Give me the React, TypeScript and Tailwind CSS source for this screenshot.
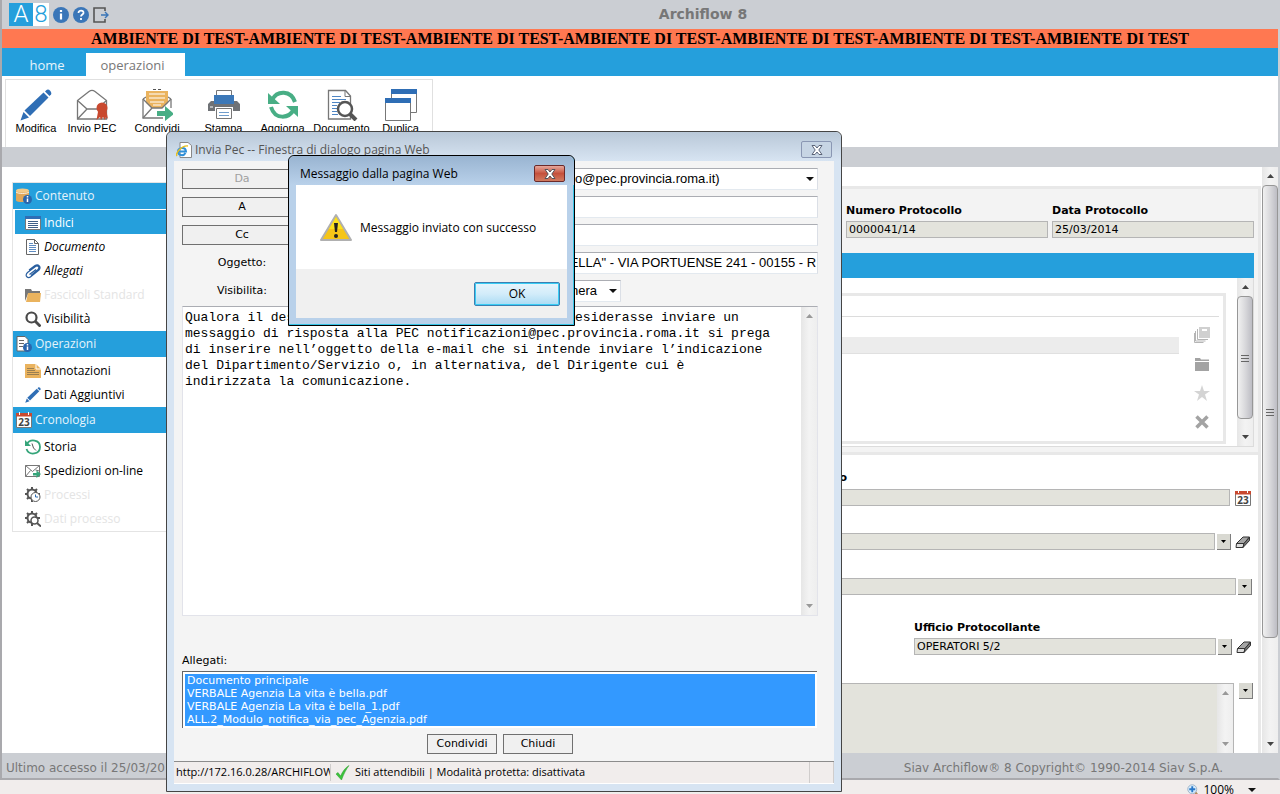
import type { ReactNode } from 'react'

const segoe = "font-['Open_Sans','Noto_Sans',sans-serif]"
const verdana = "font-['DejaVu_Sans',sans-serif]"
const arial = "font-['Liberation_Sans',sans-serif]"

/* ---------- toolbar icons (32x32) ---------- */

function Svg({ size = 32, box = 32, children }: { size?: number; box?: number; children: ReactNode }) {
  return (
    <svg width={size} height={size} viewBox={`0 0 ${box} ${box}`} fill="none" className="shrink-0" aria-hidden="true">
      {children}
    </svg>
  )
}

const PencilShape = () => (
  <>
    <path d="M4.500 21.500L23.500 3.500l5 5L10 27z" fill="#2f6eb5" />
    <path d="M25 2.500l1.500-1.500c2-2 6 2 4.500 4.500L29.500 7z" fill="#2f6eb5" />
    <path d="M3.500 23l5.500 5.500L.5 31.500z" fill="#2f6eb5" />
  </>
)

const PencilIcon = () => <Svg><PencilShape /></Svg>

const PecIcon = () => (
  <Svg>
    <path d="M1.500 11.500L13 2.500c2-1.500 4-1.500 6 0l11.500 9V30h-29z" fill="#fff" stroke="#777" strokeWidth="1.300" />
    <path d="M1.500 11.500L11 20h10l9.500-8.500M11 20l-9.500 10" stroke="#777" strokeWidth="1.300" />
    <path d="M22.500 20l-2 11 3.500-3 1 3 2-3 2 3 1-3 2 2-2-10z" fill="#c9492f" />
    <circle cx="26" cy="19" r="5.500" fill="#c9492f" />
  </Svg>
)

const ShareIcon = () => (
  <Svg>
    <path d="M2 10v19h20M2 10l3-2M30 10v9M30 10l-3-2" stroke="#777" strokeWidth="1.300" />
    <path d="M5 2h22v12l-6 5H11l-6-5z" fill="#eab35e" />
    <path d="M8 5h16M8 9h16M9 13h14M12 16h8" stroke="#fff" strokeWidth="1.200" />
    <path d="M2 10l9 9h10l9-9M2 29l9-10" stroke="#777" strokeWidth="1.300" />
    <path d="M12 .5h3M17 .5h3" stroke="#555" />
    <path d="M16 22h8v-5l9 8-9 7v-5h-8z" fill="#48ae85" />
  </Svg>
)

const PrintIcon = () => (
  <Svg>
    <path d="M8.500 6V1.500h15V8" stroke="#777" fill="#fff" />
    <path d="M3 12h3V9h20v3h3l3 3v7h-7v-4H7v4H0v-7z" fill="#6f7276" />
    <path d="M6 6h20v9H6z" fill="#3c78b8" />
    <path d="M8.500 19.500h15v10h-15z" fill="#fff" stroke="#777" />
    <path d="M11 23.500h10M11 26.500h10" stroke="#6f9ccb" />
    <path d="M2 18h3" stroke="#fff" />
  </Svg>
)

const RefreshIcon = () => (
  <Svg>
    <path d="M5 11C10 1 24 1 28 13" stroke="#48ae85" strokeWidth="4" />
    <path d="M1 4v11h12z" fill="#48ae85" />
    <path d="M27 20C22 30 8 31 4 18" stroke="#48ae85" strokeWidth="4" />
    <path d="M31 28V17H19z" fill="#48ae85" />
  </Svg>
)

const DocSearchIcon = () => (
  <Svg>
    <path d="M2.500 1.500h17l5 5.500v23h-22z" fill="#fff" stroke="#777" strokeWidth="1.300" />
    <path d="M19 2v5.500h5.500" stroke="#777" />
    <path d="M6 7.500h9M6 10.500h14M6 13.500h8M6 16.500h5M6 19.500h5M6 22.500h5M6 25.500h6" stroke="#4f86c4" />
    <circle cx="19" cy="20" r="7" fill="#fff" stroke="#555" strokeWidth="2.500" />
    <path d="M24 25l6 6" stroke="#555" strokeWidth="4" />
  </Svg>
)

const DuplicateIcon = () => (
  <Svg>
    <path d="M6.500 1.500h25v22h-25z" fill="#fff" stroke="#777" />
    <path d="M6 0h26v5H6z" fill="#2f6eb5" />
    <path d="M.5 10.500h25v21H.5z" fill="#fff" stroke="#777" />
    <path d="M0 9h26v5H0z" fill="#2f6eb5" />
  </Svg>
)

/* ---------- small icons (16x16) ---------- */

const InfoBadge = () => (
  <>
    <circle cx="11.500" cy="11.500" r="4.500" fill="#2a66ad" />
    <path d="M11.500 8v1.500M11.500 10.500v3.500" stroke="#fff" strokeWidth="1.500" />
  </>
)

const DatabaseIcon = () => (
  <Svg size={16} box={16}>
    <path d="M0 2.500v10c1 2 11 2 13 0v-10z" fill="#e0a75a" />
    <ellipse cx="6.500" cy="2.500" rx="6.500" ry="2" fill="#f3cb8a" />
    <path d="M0 4c2 2 11 2 13 0" stroke="#fff" strokeWidth=".8" />
    <InfoBadge />
  </Svg>
)

const DocInfoIcon = () => (
  <Svg size={16} box={16}>
    <path d="M1 .5h8l3 3V15H1z" fill="#fff" stroke="#666" />
    <path d="M3 4.500h5M3 7.500h5M3 10.500h4" stroke="#666" />
    <InfoBadge />
  </Svg>
)

const CalendarIcon = () => (
  <Svg size={16} box={16}>
    <path d="M.5 3h15v12.500H.5z" fill="#fff" stroke="#777" />
    <path d="M0 1h16v3.500H0z" fill="#c9492f" />
    <path d="M3.500 0v3M12.500 0v3" stroke="#fff" />
    <text x="8" y="13.500" textAnchor="middle" fontSize="10" fontWeight="700" fontFamily="Open Sans" fill="#444">23</text>
  </Svg>
)

const ListIcon = () => (
  <Svg size={16} box={16}>
    <path d="M.5 1.500h15v13H.5z" fill="#fff" stroke="#777" />
    <path d="M0 1h16v3H0z" fill="#2f6eb5" />
    <path d="M3 6.500h10M3 8.500h10M3 10.500h10M3 12.500h10" stroke="#3f5f88" />
  </Svg>
)

const DocIcon = () => (
  <Svg size={16} box={16}>
    <path d="M1.500.5h8l4 4v11h-12z" fill="#fff" stroke="#666" />
    <path d="M9.500.5v4h4" stroke="#666" />
    <path d="M4 4.500h4M4 6.500h7M4 8.500h7M4 10.500h7M4 12.500h7" stroke="#5f8cc2" />
  </Svg>
)

const ClipIcon = () => (
  <Svg size={16} box={16}>
    <path d="M6 12.500l7-6c2-2 0-4.500-2.500-3L2.500 9.500C-1 13 3 16 6 13.500l8-6.500c2.500-3-.5-6.500-4-4.500L4 7M4.500 11.500l6.500-5" stroke="#2a5f9f" strokeWidth="1.200" />
  </Svg>
)

const FolderOpenIcon = () => (
  <Svg size={16} box={16}>
    <path d="M0 14V2h6l1 2h8v3H3z" fill="#777" />
    <path d="M3 6h13l-1 9H1z" fill="#eab35e" />
  </Svg>
)

const SearchIcon = () => (
  <Svg size={16} box={16}>
    <circle cx="6.500" cy="6.500" r="5" stroke="#4a4a4a" strokeWidth="2.200" />
    <path d="M10 10l5.500 5.500" stroke="#4a4a4a" strokeWidth="2.800" />
  </Svg>
)

const NoteIcon = () => (
  <Svg size={16} box={16}>
    <path d="M0 1h11l5 5v9H0z" fill="#eab35e" />
    <path d="M11 1v5h5" stroke="#fff" />
    <path d="M2 5.500h7M2 7.500h8M2 9.500h12M2 11.500h12" stroke="#9a7f52" />
  </Svg>
)

const SmallPencilIcon = () => <Svg size={16} box={32}><PencilShape /></Svg>

const HistoryIcon = () => (
  <Svg size={16} box={16}>
    <path d="M2 5c3-5.500 13-4.500 13 3s-11 9-13.500 2" stroke="#35a57a" strokeWidth="1.800" />
    <path d="M0 1v6h6z" fill="#35a57a" />
    <path d="M7 4.500L8.500 9l2.500 2.500" stroke="#555" />
  </Svg>
)

const MailIcon = () => (
  <Svg size={16} box={16}>
    <path d="M.5 2.500h14v11H.5zM.5 2.500l7 6 7-6M.5 13.500l5-6M14.500 8l-4-1" stroke="#777" />
    <path d="M8 10h3.500V7.500L16 11l-4.500 4v-2.500H8z" fill="#35a57a" />
  </Svg>
)

const GearShape = () => (
  <>
    <circle cx="7" cy="7" r="4.500" stroke="#555" strokeWidth="2" />
    <path d="M7 0v3M7 11v4M0 7h3M2 2l2 2M12 2l-2 2M2 12l2-2M11 7h4" stroke="#555" strokeWidth="2" />
  </>
)

const GearClockIcon = () => (
  <Svg size={16} box={16}>
    <GearShape />
    <circle cx="10.500" cy="10" r="4.500" fill="#fff" stroke="#555" />
    <path d="M10.500 7.500V10H13" stroke="#2f6eb5" />
  </Svg>
)

const GearSearchIcon = () => (
  <Svg size={16} box={16}>
    <GearShape />
    <circle cx="9.500" cy="9.500" r="3.500" fill="#fff" stroke="#555" strokeWidth="1.500" />
    <path d="M12 12l4 3.500" stroke="#555" strokeWidth="2" />
  </Svg>
)

const EraserIcon = () => (
  <Svg size={16} box={16}>
    <path d="M1.500 9.500L8 3h6.500L9 9.500z" fill="#a5a5a5" stroke="#333" />
    <path d="M1.500 9.500H9l-1 4H1z" fill="#ddd" stroke="#333" />
    <path d="M8 13.500l1-4L14.500 3v3.500z" fill="#777" stroke="#333" />
  </Svg>
)

const Caret = () => (
  <svg width="8" height="4" viewBox="0 0 8 4" aria-hidden="true"><path d="M0 0h8L4 4z" fill="#111" /></svg>
)

const CloseGlyph = ({ stroke }: { stroke: string }) => (
  <svg width="12" height="10" viewBox="0 0 12 10" aria-hidden="true">
    <path d="M1 .5h3l2 2.500 2-2.500h3L7.800 5 11 9.500H8L6 7 4 9.500H1L4.200 5z" fill="#fff" stroke={stroke} />
  </svg>
)

/* ---------- shared pieces ---------- */

function Scrollbar({ thumb, dim = false }: { thumb?: string; dim?: boolean }) {
  const fill = dim ? '#999' : '#444'
  return (
    <div className="flex w-4 shrink-0 flex-col self-stretch bg-gradient-to-r from-[#e6e6e6] via-[#f3f3f3] to-[#eeeeee]">
      <button aria-label="Scorri su" className="flex h-[18px] w-full shrink-0 items-center justify-center">
        <svg width="7" height="4" viewBox="0 0 7 4"><path d="M0 4h7L3.500 0z" fill={fill} /></svg>
      </button>
      <div className="min-h-0 flex-1">
        {thumb && (
          <div className={`${thumb} flex w-full flex-col items-center justify-center gap-px rounded-sm border border-[#979797] bg-gradient-to-r from-[#f1f1f1] via-[#d9d9dc] to-[#bdbdc4]`}>
            <span className="h-0.5 w-2 border-b border-[#666]" />
            <span className="h-0.5 w-2 border-b border-[#666]" />
            <span className="h-0.5 w-2 border-b border-[#666]" />
          </div>
        )}
      </div>
      <button aria-label="Scorri giù" className="flex h-[18px] w-full shrink-0 items-center justify-center">
        <svg width="7" height="4" viewBox="0 0 7 4"><path d="M0 0h7L3.500 4z" fill={fill} /></svg>
      </button>
    </div>
  )
}

const DropButton = () => (
  <button aria-label="Apri elenco" className="flex h-4 w-3.5 shrink-0 items-center justify-center border-r border-b border-[#7d7d7d] bg-[#d9d9d2]">
    <svg width="5" height="3" viewBox="0 0 5 3"><path d="M0 0h5L2.500 3z" fill="#000" /></svg>
  </button>
)

const fieldBox = 'h-[17px] min-w-0 border border-[#b5b5b5] bg-[#e3e3dc] px-0.5 text-[11px] text-black'

/* ---------- page parts ---------- */

const groups = [
  { width: 'w-14', items: [{ label: 'Modifica', icon: <PencilIcon /> }, { label: 'Invio PEC', icon: <PecIcon /> }] },
  { width: 'w-14', items: [{ label: 'Condividi', icon: <ShareIcon /> }] },
  {
    width: 'w-[59px]',
    items: [
      { label: 'Stampa', icon: <PrintIcon /> },
      { label: 'Aggiorna', icon: <RefreshIcon /> },
      { label: 'Documento', icon: <DocSearchIcon /> },
      { label: 'Duplica', icon: <DuplicateIcon /> },
    ],
  },
]

const menu = [
  {
    title: 'Contenuto',
    icon: <DatabaseIcon />,
    items: [
      { label: 'Indici', icon: <ListIcon />, style: 'bg-[#259fdc] text-white' },
      { label: 'Documento', icon: <DocIcon />, style: 'text-black italic' },
      { label: 'Allegati', icon: <ClipIcon />, style: 'text-black italic' },
      { label: 'Fascicoli Standard', icon: <FolderOpenIcon />, style: 'text-[#e4e4e4]' },
      { label: 'Visibilità', icon: <SearchIcon />, style: 'text-black' },
    ],
  },
  {
    title: 'Operazioni',
    icon: <DocInfoIcon />,
    items: [
      { label: 'Annotazioni', icon: <NoteIcon />, style: 'text-black' },
      { label: 'Dati Aggiuntivi', icon: <SmallPencilIcon />, style: 'text-black' },
    ],
  },
  {
    title: 'Cronologia',
    icon: <CalendarIcon />,
    items: [
      { label: 'Storia', icon: <HistoryIcon />, style: 'text-black' },
      { label: 'Spedizioni on-line', icon: <MailIcon />, style: 'text-black' },
      { label: 'Processi', icon: <GearClockIcon />, style: 'text-[#e4e4e4]' },
      { label: 'Dati processo', icon: <GearSearchIcon />, style: 'text-[#e4e4e4]' },
    ],
  },
]

function Header() {
  return (
    <header className="shrink-0">
      <div className="grid h-[29px] grid-cols-[1fr_auto_1fr] items-center bg-[#cbced3]">
        <div className="flex items-center gap-1 pl-[7px]">
          <div className="flex h-[23px] font-['Roboto',sans-serif] text-[24px] leading-[23px] font-light">
            <span className="w-6 bg-[#259fdc] text-center text-white">A</span>
            <span className="w-4 bg-white text-center text-[#259fdc]">8</span>
          </div>
          <button aria-label="Informazioni">
            <Svg size={16} box={16}>
              <circle cx="8" cy="8" r="8" fill="#3a76b8" />
              <path d="M8 3v2M8 6.500v6" stroke="#fff" strokeWidth="2.200" />
            </Svg>
          </button>
          <button aria-label="Aiuto">
            <Svg size={16} box={16}>
              <circle cx="8" cy="8" r="8" fill="#3a76b8" />
              <path d="M5.500 6c0-3.500 5.500-3 5 0-.3 1.500-2.500 1.500-2.500 3.500M8 11v2" stroke="#fff" strokeWidth="1.800" />
            </Svg>
          </button>
          <button aria-label="Esci">
            <Svg size={16} box={16}>
              <path d="M12 4V1H1v14h11v-3" stroke="#555" strokeWidth="1.600" />
              <path d="M8 8h7M12 5l3 3-3 3" stroke="#3a76b8" strokeWidth="1.400" />
            </Svg>
          </button>
        </div>
        <h1 className={`pl-[126px] text-[14px] font-bold text-[#777] ${verdana}`}>Archiflow 8</h1>
        <span />
      </div>
      <p className="h-[19px] overflow-hidden bg-[#ff7851] text-center font-['Liberation_Serif',serif] text-[16px] leading-[19px] font-bold whitespace-nowrap text-black">
        AMBIENTE DI TEST-AMBIENTE DI TEST-AMBIENTE DI TEST-AMBIENTE DI TEST-AMBIENTE DI TEST-AMBIENTE DI TEST-AMBIENTE DI TEST
      </p>
      <nav className={`flex h-7 items-end bg-[#259fdc] text-[13px] ${segoe}`}>
        <button className="h-[23px] w-[84px] pt-0.5 pl-1.5 leading-[21px] text-[#e6f4fb]">home</button>
        <button className="h-[23px] w-[99px] bg-white pt-0.5 pr-1.5 leading-[21px] text-[#777]">operazioni</button>
      </nav>
      <div className="flex h-[71px] bg-white pt-[3px] pl-[3px]">
        <div className={`flex gap-[9px] border border-b-0 border-[#e0e0e0] px-0.5 text-[11px] ${arial}`}>
          {groups.map((g, i) => (
            <div key={i} className="flex">
              {g.items.map((t) => (
                <button key={t.label} className={`${g.width} flex flex-col items-center pt-[9px] text-black`}>
                  {t.icon}
                  <span className="leading-[14px]">{t.label}</span>
                </button>
              ))}
            </div>
          ))}
        </div>
      </div>
      <div className="h-5 bg-[#cbced3]" />
    </header>
  )
}

function Sidebar() {
  return (
    <aside className={`mt-[15px] ml-2.5 w-[170px] shrink-0 self-start border border-[#e4e4e4] bg-white text-[12px] ${segoe}`}>
      {menu.map((section) => (
        <section key={section.title}>
          <h2 className="flex h-[26px] items-center gap-[3px] bg-[#259fdc] pl-[3px] text-[#e6f4fb]">
            {section.icon}
            {section.title}
          </h2>
          <ul className="py-px pl-0.5">
            {section.items.map((item) => (
              <li key={item.label}>
                <a href="#" className={`flex h-6 items-center gap-[3px] pt-0.5 pl-2.5 ${item.style}`}>
                  {item.icon}
                  {item.label}
                </a>
              </li>
            ))}
          </ul>
        </section>
      ))}
    </aside>
  )
}

function Content() {
  return (
    <main className={`mr-px flex min-w-0 flex-1 flex-col pt-[19px] text-[11px] ${verdana}`}>
      <section className="border-t-[3px] border-r-[3px] border-[#e8e8e8] bg-[#f3f3f3] pt-[15px] pr-1 pb-[5px]">
        <div className="flex justify-end gap-1">
          <label className="flex w-[202px] flex-col gap-1 leading-[13px] font-bold">
            Numero Protocollo
            <input readOnly defaultValue="0000041/14" className={`${fieldBox} w-full font-normal`} />
          </label>
          <label className="flex w-[202px] flex-col gap-1 leading-[13px] font-bold">
            Data Protocollo
            <input readOnly defaultValue="25/03/2014" className={`${fieldBox} w-full font-normal`} />
          </label>
        </div>
        <div className="mt-[15px] h-[25px] bg-[#259fdc]" />
        <div className="flex h-[169px] border-r border-b border-[#dcdcdc] bg-white">
          <div className="mt-[15px] mr-[11px] mb-0.5 flex min-w-0 flex-1 flex-col border-[3px] border-[#e8e8e8] pr-1">
            <div className="h-[21px] border-b border-[#dcdcdc]" />
            <div className="flex flex-1 justify-end gap-[15px] pr-[9px]">
              <div className="mt-5 h-[17px] flex-1 border-b border-[#e0e0e0] bg-[#ececec]" />
              <div className="flex flex-col gap-[13px] pt-2.5">
                <button aria-label="Copia">
                  <Svg size={16} box={16}>
                    <path d="M5 0h11v11H5z" fill="#d0d0d0" />
                    <path d="M8 2h5v2H8z" fill="#fff" />
                    <path d="M3.500 2v10.500H14M1.500 4v10h10M.5 6v9.500h9" stroke="#b5b5b5" />
                  </Svg>
                </button>
                <button aria-label="Cartella">
                  <Svg size={16} box={16}><path d="M1 2h5l1 1.500h8V5H1zM1 6h14v9H1z" fill="#a3a3a3" /></Svg>
                </button>
                <button aria-label="Preferiti">
                  <Svg size={16} box={16}><path d="M8 0l2 6h6l-5 3.500 2 6.500-5-4-5 4 2-6.500L0 6h6z" fill="#d4d4d4" /></Svg>
                </button>
                <button aria-label="Elimina">
                  <Svg size={16} box={16}><path d="M2.500 2.500l11 11M13.500 2.500l-11 11" stroke="#a3a3a3" strokeWidth="3.500" /></Svg>
                </button>
              </div>
            </div>
          </div>
          <Scrollbar thumb="h-[123px]" />
        </div>
      </section>
      <section className="flex min-h-0 flex-1 flex-col border-t-[3px] border-r-[3px] border-[#e8e8e8] bg-white">
        <div className="mt-4 w-[665px] text-right leading-[13px] font-bold">o</div>
        <div className="mt-[5px] flex items-center gap-[5px] pr-[7px]">
          <input aria-label="Data" readOnly className={`${fieldBox} flex-1`} />
          <button aria-label="Calendario"><CalendarIcon /></button>
        </div>
        <div className="mt-[27px] flex items-center gap-0.5 pr-[7px]">
          <input aria-label="Mittente" readOnly className={`${fieldBox} flex-1`} />
          <DropButton />
          <button aria-label="Cancella" className="ml-0.5"><EraserIcon /></button>
        </div>
        <div className="mt-7 flex items-center gap-0.5 pr-1.5">
          <input aria-label="Classifica" readOnly className={`${fieldBox} flex-1`} />
          <DropButton />
        </div>
        <div className="mt-[26px] flex justify-end pr-1.5">
          <div className="flex w-[338px] flex-col gap-1">
            <label htmlFor="ufficio" className="leading-[13px] font-bold">Ufficio Protocollante</label>
            <div className="flex items-center gap-0.5">
              <input id="ufficio" readOnly defaultValue="OPERATORI 5/2" className={`${fieldBox} flex-1`} />
              <DropButton />
              <button aria-label="Cancella" className="ml-0.5"><EraserIcon /></button>
            </div>
          </div>
        </div>
        <div className="mt-7 flex min-h-0 flex-1 gap-[5px] pr-[5px]">
          <div className="flex min-w-0 flex-1 border border-b-0 border-[#b5b5b5] bg-[#e3e3dc]">
            <textarea aria-label="Note" readOnly className="min-w-0 flex-1 resize-none" />
            <Scrollbar dim />
          </div>
          <DropButton />
        </div>
      </section>
    </main>
  )
}

/* ---------- dialogs ---------- */

const sunken = 'h-[22px] rounded-none border border-t-[#abadb3] border-r-[#dbdfe6] border-b-[#e3e9ef] border-l-[#e2e3ea] bg-white text-black'
const flatButton = 'h-5 border border-[#707070] bg-[#f0f0f0] text-[11px] leading-[18px]'

const body =
  'Qualora il destinatario della presente email PEC desiderasse inviare un messaggio di risposta alla PEC notificazioni@pec.provincia.roma.it si prega di inserire nell’oggetto della e-mail che si intende inviare l’indicazione del Dipartimento/Servizio o, in alternativa, del Dirigente cui è indirizzata la comunicazione.'

const attachments = [
  'Documento principale',
  'VERBALE Agenzia La vita è bella.pdf',
  'VERBALE Agenzia La vita è bella_1.pdf',
  'ALL.2_Modulo_notifica_via_pec_Agenzia.pdf',
]

function PecDialog() {
  return (
    <div role="dialog" aria-label="Invia Pec" className="absolute top-[131px] left-[166px] flex h-[661px] w-[676px] flex-col rounded-t-md border border-[#454545] bg-[#d7e4f2] px-[7px] pb-[7px]">
      <div className={`-mx-[7px] flex h-[29px] shrink-0 items-center gap-[3px] rounded-t-md bg-gradient-to-b from-[#b9c8d8] to-[#d7e4f2] pt-1.5 pr-[9px] pl-[9px] text-[12px] text-[#555] ${segoe}`}>
        <Svg size={16} box={16}>
          <path d="M4 .5h8l3.500 3v12H4z" fill="#fff" stroke="#888" />
          <path d="M9.500 11c-2 3.500-7.500 2.500-7.500-1.500S9.500 4.500 10 9.500H3" stroke="#2f8fd8" strokeWidth="2" />
          <path d="M1 14c-2-3 5-11 11-10" stroke="#e8c020" strokeWidth="1.400" />
        </Svg>
        <span className="flex-1">Invia Pec -- Finestra di dialogo pagina Web</span>
        <button aria-label="Chiudi finestra" className="flex h-[17px] w-[31px] items-center justify-center rounded-xs border border-[#8a97b3] bg-[#c7d5e4]">
          <CloseGlyph stroke="#5b6478" />
        </button>
      </div>
      <div className={`flex min-h-0 flex-1 flex-col bg-[#f4f4f4] px-2 pt-[7px] text-[11px] ${verdana}`}>
        <div className="grid grid-cols-[120px_1fr] items-center gap-x-1 gap-y-1.5 pr-2">
          <button disabled className={`${flatButton} text-[#a0a0a0]`}>Da</button>
          <div className="relative">
            <select aria-label="Da" className={`${sunken} w-full appearance-none pl-[268px] text-[13px] ${arial}`}>
              <option>o@pec.provincia.roma.it)</option>
            </select>
            <span className="pointer-events-none absolute top-[9px] right-1"><Caret /></span>
          </div>
          <button className={flatButton}>A</button>
          <input aria-label="A" className={`${sunken} w-full px-1`} />
          <button className={flatButton}>Cc</button>
          <input aria-label="Cc" className={`${sunken} w-full px-1`} />
          <label htmlFor="oggetto" className="text-center">Oggetto:</label>
          <div className={`${sunken} flex pr-px pl-[254px]`}>
            <input id="oggetto" defaultValue={'BELLA" - VIA PORTUENSE 241 - 00155 - ROMA'} className={`min-w-0 flex-1 text-[13px] ${arial}`} />
          </div>
          <label htmlFor="visibilita" className="text-center">Visibilita:</label>
          <div className="relative w-[315px]">
            <select id="visibilita" className={`${sunken} w-full appearance-none pl-[264px] text-[13px] ${arial}`}>
              <option>nera</option>
            </select>
            <span className="pointer-events-none absolute top-[9px] right-1"><Caret /></span>
          </div>
        </div>
        <div className="mt-1 mr-2 flex h-[310px] border border-[#e2e3ea] border-t-[#abadb3] bg-white">
          <textarea
            aria-label="Testo"
            defaultValue={body}
            className="min-w-0 flex-1 resize-none overflow-hidden pt-[3px] pr-7 pl-0.5 font-['Liberation_Mono',monospace] text-[13px] leading-4 text-black"
          />
          <Scrollbar dim />
        </div>
        <label htmlFor="allegati" className="mt-[38px] leading-[14px]">Allegati:</label>
        <ul id="allegati" className="mt-[3px] mr-[9px] border-t border-l border-[#666] bg-white p-0.5">
          {attachments.map((name) => (
            <li key={name} className="h-[13px] bg-[#3399ff] pl-0.5 leading-[13px] text-white">{name}</li>
          ))}
        </ul>
        <div className="mt-1.5 flex justify-center gap-1.5 pr-2">
          <button className={`${flatButton} w-[70px]`}>Condividi</button>
          <button className={`${flatButton} w-[70px]`}>Chiudi</button>
        </div>
      </div>
      <footer className={`flex h-[23px] shrink-0 items-center border-t border-b border-t-[#8c8c8c] border-b-white bg-[#f1edec] text-[11px] text-black ${segoe}`}>
        <span className="ml-0.5 w-[155px] overflow-hidden border-r border-[#d0cdcc] whitespace-nowrap">http://172.16.0.28/ARCHIFLOW</span>
        <span className="flex flex-1 items-center gap-1 pl-1">
          <Svg size={16} box={16}><path d="M1 9l2-1.500L5.500 11C8 6 10 3 14 .5c-3 4-5 8-7.500 14.500z" fill="#3cc43c" stroke="#2a9a2a" strokeWidth=".5" /></Svg>
          Siti attendibili | Modalità protetta: disattivata
        </span>
        <span className="h-full w-[25px] border-r border-l border-[#d0cdcc]" />
      </footer>
    </div>
  )
}

function AlertDialog() {
  return (
    <div role="alertdialog" aria-label="Messaggio dalla pagina Web" className={`absolute top-[155px] left-[288px] flex h-[171px] w-[287px] flex-col rounded-t-md border border-black bg-[#b9d1ea] text-[12px] text-black shadow-[inset_-1px_-1px_0_#35c4e6] ${segoe}`}>
      <div className="flex h-[29px] shrink-0 items-center rounded-t-md bg-gradient-to-b from-[#99b4d1] to-[#b9d1ea] pt-1.5 pr-[9px] pl-[11px]">
        <span className="flex-1">Messaggio dalla pagina Web</span>
        <button aria-label="Chiudi messaggio" className="flex h-[17px] w-[31px] items-center justify-center rounded-xs border border-[#6b2a2a] bg-gradient-to-b from-[#e5a79c] via-[#c5503c] to-[#d07a60]">
          <CloseGlyph stroke="#53535a" />
        </button>
      </div>
      <div className="mx-[7px] flex flex-1 items-center gap-2 bg-white pt-0.5 pl-6">
        <Svg>
          <path d="M16 3L31 28H1z" fill="#f5c518" stroke="#b0b0b0" strokeWidth="2" strokeLinejoin="round" />
          <path d="M16 5l7 12H9z" fill="#fbe21f" />
          <path d="M14 11h4l-1 9h-2z" fill="#222" />
          <circle cx="16" cy="24" r="2" fill="#222" />
        </Svg>
        <p>Messaggio inviato con successo</p>
      </div>
      <div className="mx-[7px] mb-[7px] flex h-[49px] items-center justify-end bg-[#f0f0f0] pr-[7px]">
        <button className="h-6 w-[86px] rounded-xs border border-[#3c7fb1] bg-gradient-to-b from-[#e8f5fc] via-[#d2ecfa] to-[#a9dbf4] leading-[22px] shadow-[inset_0_0_0_1px_#39cdf5]">OK</button>
      </div>
    </div>
  )
}

export default function App() {
  return (
    <div className="relative flex h-screen flex-col overflow-hidden bg-white">
      <div className="flex min-h-0 flex-1 flex-col border-r-2 border-b-2 border-l-2 border-[#a9a9ad] border-r-[#cbced3]">
        <Header />
        <div className="flex min-h-0 flex-1 overflow-hidden">
          <Sidebar />
          <Content />
          <Scrollbar thumb="h-[453px]" />
        </div>
        <footer className={`flex h-[25px] shrink-0 items-center justify-between bg-[#cbced3] pt-1 pr-[55px] pl-1 text-[12px] text-[#777] ${verdana}`}>
          <span>Ultimo accesso il 25/03/2014</span>
          <span>Siav Archiflow® 8 Copyright© 1990-2014 Siav S.p.A.</span>
        </footer>
      </div>
      <div className={`flex h-3.5 shrink-0 items-start justify-end gap-1 overflow-hidden bg-[#f1edec] pt-1 pr-6 text-[12px] leading-3 text-black ${segoe}`}>
        <Svg size={12} box={16}>
          <path d="M10 10l5 6" stroke="#b48a5a" strokeWidth="3" />
          <circle cx="7" cy="7" r="6" fill="#d8ecfb" stroke="#8fa6bd" />
          <path d="M7 3v8M3 7h8" stroke="#2a78c8" strokeWidth="2.500" />
        </Svg>
        <span>100%</span>
        <span className="pt-1 pl-2.5"><Caret /></span>
      </div>
      <PecDialog />
      <AlertDialog />
    </div>
  )
}
